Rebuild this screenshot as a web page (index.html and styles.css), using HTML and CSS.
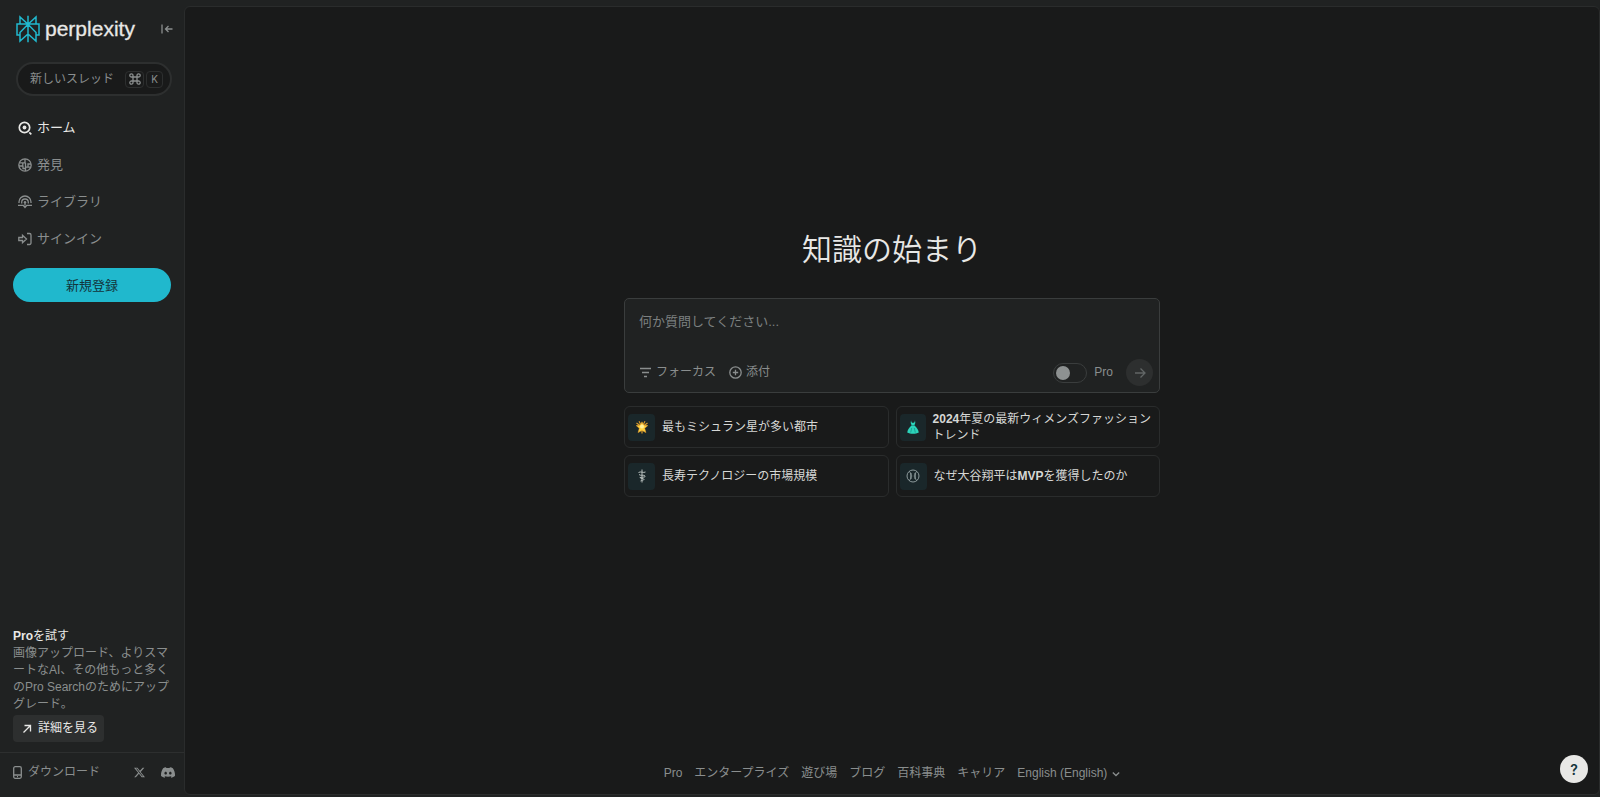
FILE: index.html
```html
<!DOCTYPE html>
<html lang="ja">
<head>
<meta charset="utf-8">
<meta name="viewport" content="width=device-width, initial-scale=1">
<title>Perplexity</title>
<link rel="stylesheet" href="styles.css">
</head>
<body>
<div class="app">
  <aside class="sidebar">
    <div class="brand-row">
      <a class="brand" href="#">
        <svg class="brand-mark" viewBox="0 0 24 28" aria-hidden="true"><path d="M12 .8v26.400M4 9V2l8 7.300L20 2v7M4 20H1V9h22v11h-3M12 9.300 4 17.500V26l8-7 8 7v-8.500z"/></svg>
        <span class="brand-name">perplexity</span>
      </a>
      <button class="icon-button" aria-label="サイドバーを閉じる">
        <svg class="icon icon-collapse" viewBox="0 0 12 12" aria-hidden="true"><path d="M1 1.500v9M11.500 6H4.500M7.500 3l-3 3 3 3"/></svg>
      </button>
    </div>

    <button class="new-thread">
      <span>新しいスレッド</span>
      <span class="keys">
        <kbd class="key"><svg class="icon icon-command" viewBox="0 0 12 12" aria-hidden="true"><path d="M4 4V2.600A1.600 1.600 0 1 0 2.600 4H9.400A1.600 1.600 0 1 0 8 2.600V9.400A1.600 1.600 0 1 0 9.400 8H2.600A1.600 1.600 0 1 0 4 9.400z"/></svg></kbd>
        <kbd class="key">K</kbd>
      </span>
    </button>

    <nav class="nav">
      <a class="nav-item nav-item-active" href="#">
        <svg class="icon icon-nav icon-home" viewBox="0 0 14 14" aria-hidden="true"><circle cx="6.500" cy="6.500" r="5.200"/><circle class="dot" cx="6.500" cy="6.500" r="1.900"/><path d="m11.300 11.300 2 2"/></svg>
        ホーム</a>
      <a class="nav-item" href="#">
        <svg class="icon icon-nav" viewBox="0 0 14 14" aria-hidden="true"><circle cx="7" cy="7" r="6.200"/><path d="M1.500 4.800H7V1M4.800 4.800V8H1M7.500 4.800v4.400h5M10 9.200V6h3M5 8v2.500h2.500V13"/></svg>
        発見</a>
      <a class="nav-item" href="#">
        <svg class="icon icon-nav" viewBox="0 0 14 14" aria-hidden="true"><path d="M1 8V7a6 6 0 0 1 12 0v1M3.700 8.500V7.300a3.300 3.300 0 0 1 6.600 0v1.200M0 10.300h5.200L7 12.500l1.800-2.200H14M7 7.500v3"/><circle class="dot" cx="7" cy="7.300" r="1.200"/></svg>
        ライブラリ</a>
      <a class="nav-item" href="#">
        <svg class="icon icon-nav" viewBox="0 0 14 14" aria-hidden="true"><path d="M.8 5.500h3.700V3.200L8.500 7l-4 3.800V8.500H.8zM9 1.500h2.500A1.500 1.500 0 0 1 13 3v8a1.500 1.500 0 0 1-1.500 1.500H9"/></svg>
        サインイン</a>
    </nav>

    <button class="signup">新規登録</button>

    <section class="upsell">
      <h2 class="upsell-title"><b class="latin">Pro</b>を試す</h2>
      <p class="upsell-text">画像アップロード、よりスマートなAI、その他もっと多くのPro Searchのためにアップグレード。</p>
      <button class="details">
        <svg class="icon icon-details" viewBox="0 0 10 10" aria-hidden="true"><path d="m1.500 8.500 7-7M2.500 1.500h6v6"/></svg>
        詳細を見る</button>
    </section>

    <div class="side-footer">
      <a class="download" href="#">
        <svg class="icon icon-phone" viewBox="0 0 9 13" aria-hidden="true"><rect x=".7" y=".7" width="7.600" height="11.600" rx="1.500"/><path d="M1 9h7M4 10.700h1"/></svg>
        ダウンロード</a>
      <span class="social">
        <a class="social-link" href="#" aria-label="X"><svg class="icon-x" viewBox="0 0 24 24" aria-hidden="true"><path d="M18.900 1.500h3.700l-8 9.200L24 22.500h-7.400l-5.800-7.600-6.600 7.600H.5l8.600-9.800L0 1.500h7.600l5.200 6.900zM17.600 20.400h2L6.500 3.500H4.300z"/></svg></a>
        <a class="social-link" href="#" aria-label="Discord"><svg class="icon-discord" viewBox="0 0 24 18" aria-hidden="true"><path fill-rule="evenodd" d="M20.300 1.500A20 20 0 0 0 15.400 0l-.7 1.300a18 18 0 0 0-5.500 0L8.500 0a20 20 0 0 0-4.900 1.500C.5 6.200-.3 10.700.1 15.200a20 20 0 0 0 6 3l1.300-2.100-1.900-.9.500-.4a14 14 0 0 0 12 0l.5.400-1.900.9 1.300 2.100a20 20 0 0 0 6-3c.5-5.200-.8-9.700-3.600-13.700zM8 12.500c-1.200 0-2.200-1.100-2.200-2.400S6.800 7.600 8 7.600s2.200 1.100 2.200 2.500-1 2.400-2.200 2.400zm8 0c-1.200 0-2.200-1.100-2.200-2.400s1-2.500 2.200-2.500 2.200 1.100 2.200 2.500-1 2.400-2.200 2.400z"/></svg></a>
      </span>
    </div>
  </aside>

  <main class="main">
    <div class="center">
      <h1 class="title">知識の始まり</h1>

      <form class="ask">
        <textarea class="ask-input" rows="1" aria-label="質問" placeholder="何か質問してください..."></textarea>
        <div class="ask-bar">
          <button type="button" class="tool">
            <svg class="icon icon-tool" viewBox="0 0 13 13" aria-hidden="true"><path d="M1 2.500h11M3 6.500h7M5 10.500h3"/></svg>
            フォーカス</button>
          <button type="button" class="tool">
            <svg class="icon icon-tool" viewBox="0 0 13 13" aria-hidden="true"><circle cx="6.500" cy="6.500" r="5.700"/><path d="M6.500 3.800v5.400M3.800 6.500h5.400"/></svg>
            添付</button>
          <label class="pro"><input class="switch" type="checkbox" role="switch">Pro</label>
          <button type="submit" class="send" aria-label="送信">
            <svg class="icon icon-send" viewBox="0 0 12 12" aria-hidden="true"><path d="M1 6h10M6.500 1.500 11 6l-4.500 4.500"/></svg>
          </button>
        </div>
      </form>

      <div class="cards">
        <a class="card" href="#">
          <span class="card-icon"><svg class="card-svg" viewBox="0 0 14 14" aria-hidden="true"><path fill="none" stroke="#d99a2b" stroke-width="1.200" d="M7 7 4 1.200M7 7l3-5.800M7 7 1.500 3M7 7l5.500-4M7 7v6.500"/><path fill="#ffd23f" stroke="#f2a52d" stroke-width=".5" d="m7 1.800 1.600 3.400 4.200.4-3.100 2.700 1.200 4.300L7 10.400l-3.900 2.200 1.200-4.300-3.100-2.700 4.200-.4z"/><circle cx="7" cy="6.500" r="2" fill="#fff09a"/></svg></span>
          <span class="card-text">最もミシュラン星が多い都市</span>
        </a>
        <a class="card" href="#">
          <span class="card-icon"><svg class="card-svg" viewBox="0 0 14 14" aria-hidden="true"><path fill="#2bd4bb" d="M5 .2 5.500 2.300 7 3l1.500-.7L9 .2 9.300 3 8.300 5.500c2.200 1.500 4 4 4.500 7-3.300 1.700-8.300 1.700-11.600 0 .5-3 2.300-5.500 4.500-7L4.700 3z"/><path fill="none" stroke="#1a8b83" stroke-width=".7" d="M5.600 5.500h2.800M5.700 8l-1 4.500M8.300 8l1 4.500"/></svg></span>
          <span class="card-text"><b class="latin">2024</b>年夏の最新ウィメンズファッション<br>トレンド</span>
        </a>
        <a class="card" href="#">
          <span class="card-icon"><svg class="card-svg" viewBox="0 0 14 14" aria-hidden="true"><path fill="none" stroke="#b6bebc" d="M7 .5v13M3.500 3.500c2-1.500 5 .8 7-.5M4 5.500c1 1.500 5 0 6 1.500s-3 1-5 1.500M5 8.500c0 1.500 4 .5 4 1.800S6 11 5.500 12"/></svg></span>
          <span class="card-text">長寿テクノロジーの市場規模</span>
        </a>
        <a class="card" href="#">
          <span class="card-icon"><svg class="card-svg" viewBox="0 0 14 14" aria-hidden="true"><g fill="none" stroke="#98a6a7" stroke-width=".9"><circle cx="7" cy="7" r="6"/><path d="M3.500 2.500c2 2.500 2 6.500 0 9M10.500 2.500c-2 2.500-2 6.500 0 9M4 5h2M4.200 7h2M4 9h2M8 5h2M7.800 7h2M8 9h2"/></g></svg></span>
          <span class="card-text">なぜ大谷翔平は<b class="latin">MVP</b>を獲得したのか</span>
        </a>
      </div>
    </div>

    <footer class="links">
      <a class="link" href="#">Pro</a>
      <a class="link" href="#">エンタープライズ</a>
      <a class="link" href="#">遊び場</a>
      <a class="link" href="#">ブログ</a>
      <a class="link" href="#">百科事典</a>
      <a class="link" href="#">キャリア</a>
      <button class="link language">English (English)
        <svg class="icon icon-chevron" viewBox="0 0 8 8" aria-hidden="true"><path d="m.8 2.500 3.200 3 3.200-3"/></svg></button>
    </footer>
  </main>
</div>
<button class="help" aria-label="ヘルプ">?</button>
</body>
</html>
```

FILE: styles.css
```css
* {
  box-sizing: border-box;
}

body {
  margin: 0;
  background: #202222;
  color: #8a8e8e;
  font-family: "Liberation Sans", "Noto Sans CJK JP", sans-serif;
  font-size: 12px;
  line-height: 17px;
}

a {
  color: inherit;
  text-decoration: none;
}

button {
  margin: 0;
  padding: 0;
  border: 0;
  background: none;
  color: inherit;
  font: inherit;
  cursor: pointer;
}

.icon {
  flex: none;
  fill: none;
  stroke: currentColor;
  stroke-width: 1.3;
}

.icon .dot {
  fill: currentColor;
  stroke: none;
}

.app {
  display: flex;
  min-height: 100vh;
}

/* Sidebar */

.sidebar {
  display: flex;
  flex: none;
  flex-direction: column;
  width: 184px;
  padding-top: 14px;
}

.brand-row {
  display: flex;
  align-items: center;
  justify-content: space-between;
  height: 30px;
  padding: 0 11px 0 16px;
}

.brand {
  display: flex;
  align-items: center;
  gap: 5px;
}

.brand-mark {
  width: 24px;
  height: 28px;
  fill: none;
  stroke: #20b8cd;
  stroke-width: 1.5;
}

.brand-name {
  color: #e8e8e6;
  font-size: 21px;
  line-height: 24px;
  -webkit-text-stroke: 0.3px #e8e8e6;
}

.icon-button {
  display: flex;
}

.icon-collapse {
  width: 12px;
  height: 12px;
}

.new-thread {
  display: flex;
  align-items: center;
  justify-content: space-between;
  height: 34px;
  margin: 18px 12px 0 16px;
  padding: 0 7px 0 12px;
  border: 2px solid #2d2f2f;
  border-radius: 17px;
  background: #191a1a;
}

.keys {
  display: flex;
  gap: 2px;
}

.key {
  display: flex;
  align-items: center;
  justify-content: center;
  width: 17px;
  height: 17px;
  border: 1px solid #2d2f2f;
  border-radius: 4px;
  font-family: Inter, sans-serif;
  font-size: 10px;
}

.key:first-child {
  width: 19px;
}

.icon-command {
  width: 12px;
  height: 12px;
}

.nav {
  display: flex;
  flex-direction: column;
  padding: 13px 18px 0;
}

.nav-item {
  display: flex;
  align-items: center;
  gap: 5px;
  height: 37px;
  font-size: 13px;
}

.nav-item-active {
  color: #e8e8e6;
}

.icon-nav {
  width: 14px;
  height: 14px;
}

.icon-home {
  stroke-width: 1.7;
}

.signup {
  height: 34px;
  margin: 11px 13px 0;
  border-radius: 17px;
  background: #20b8cd;
  color: #13343b;
  font-size: 13px;
}

.upsell {
  margin-top: auto;
  padding: 0 13px 10px;
}

.upsell-title {
  margin: 0;
  color: #e8e8e6;
  font-size: 12px;
  font-weight: 400;
}

.upsell-text {
  margin: 0 0 2px;
}

.details {
  display: flex;
  align-items: center;
  gap: 6px;
  height: 27px;
  padding: 0 6px 0 9px;
  border-radius: 4px;
  background: #2d2f2f;
  color: #e8e8e6;
}

.icon-details {
  width: 10px;
  height: 10px;
}

.side-footer {
  display: flex;
  align-items: center;
  justify-content: space-between;
  height: 45px;
  padding: 0 9px 6px 13px;
  border-top: 1px solid #2d2f2f;
}

.download {
  display: flex;
  align-items: center;
  gap: 6px;
}

.icon-phone {
  width: 9px;
  height: 13px;
}

.social {
  display: flex;
  align-items: center;
  gap: 16px;
}

.social-link {
  display: flex;
}

.icon-x {
  width: 11px;
  height: 11px;
  fill: currentColor;
}

.icon-discord {
  width: 14px;
  height: 11px;
  fill: currentColor;
}

/* Main panel */

.main {
  display: flex;
  flex: 1;
  flex-direction: column;
  align-items: center;
  margin: 6px 0 2px;
  border: 1px solid #2a2c2c;
  border-radius: 6px;
  background: #191a1a;
}

.center {
  display: flex;
  flex: 1;
  flex-direction: column;
  justify-content: center;
  width: 100%;
  max-width: 536px;
  padding-bottom: 46px;
}

.title {
  margin: 0 0 27px;
  color: #e8e8e6;
  font-size: 30px;
  font-weight: 350;
  line-height: 42px;
  text-align: center;
}

.ask {
  display: flex;
  flex-direction: column;
  justify-content: space-between;
  height: 95px;
  padding: 13px 6px 6px 14px;
  border: 1px solid #3a3d3d;
  border-radius: 5px;
  background: #202222;
}

.ask-input {
  width: 100%;
  height: 20px;
  padding: 0;
  border: 0;
  outline: 0;
  background: none;
  color: #e8e8e6;
  font: inherit;
  font-size: 13px;
  line-height: 20px;
  resize: none;
}

.ask-input::placeholder {
  color: #7c8080;
}

.ask-bar {
  display: flex;
  align-items: center;
  gap: 13px;
}

.tool {
  display: flex;
  align-items: center;
  gap: 4px;
}

.icon-tool {
  width: 13px;
  height: 13px;
}

.pro {
  display: flex;
  align-items: center;
  gap: 7px;
  margin-left: auto;
}

.switch {
  display: flex;
  align-items: center;
  width: 34px;
  height: 20px;
  margin: 0;
  padding: 0 2px;
  border: 1px solid #3a3d3d;
  border-radius: 10px;
  appearance: none;
}

.switch::before {
  width: 14px;
  height: 14px;
  border-radius: 50%;
  background: #8d9191;
  content: "";
}

.switch:checked {
  justify-content: flex-end;
}

.send {
  display: flex;
  align-items: center;
  justify-content: center;
  width: 27px;
  height: 27px;
  border-radius: 50%;
  background: #2d2f2f;
  color: #626666;
}

.icon-send {
  width: 12px;
  height: 12px;
}

.cards {
  display: grid;
  grid-template-columns: 1fr 1fr;
  gap: 7px;
  margin-top: 13px;
}

.card {
  display: flex;
  align-items: center;
  gap: 7px;
  height: 42px;
  padding: 0 8px 0 3px;
  border: 1px solid #2a2c2c;
  border-radius: 6px;
  color: #d6d7d5;
  line-height: 16px;
}

.card-icon {
  display: flex;
  flex: 0 1 27px;
  align-items: center;
  justify-content: center;
  height: 27px;
  border-radius: 4px;
  background: #1a272a;
}

.card-text {
  flex: none;
}

.card-svg {
  flex: none;
  width: 14px;
  height: 14px;
}

.latin {
  font-weight: 700;
}

.links {
  display: flex;
  flex-wrap: wrap;
  align-items: center;
  justify-content: center;
  gap: 12px;
  padding-bottom: 12px;
}

.language {
  display: flex;
  align-items: center;
  gap: 5px;
}

.icon-chevron {
  width: 8px;
  height: 8px;
}

.help {
  position: fixed;
  right: 12px;
  bottom: 14px;
  width: 28px;
  height: 28px;
  border-radius: 50%;
  background: #e8e8e6;
  color: #13343b;
  font-family: Inter, sans-serif;
  font-size: 14px;
  font-weight: 600;
}
```
